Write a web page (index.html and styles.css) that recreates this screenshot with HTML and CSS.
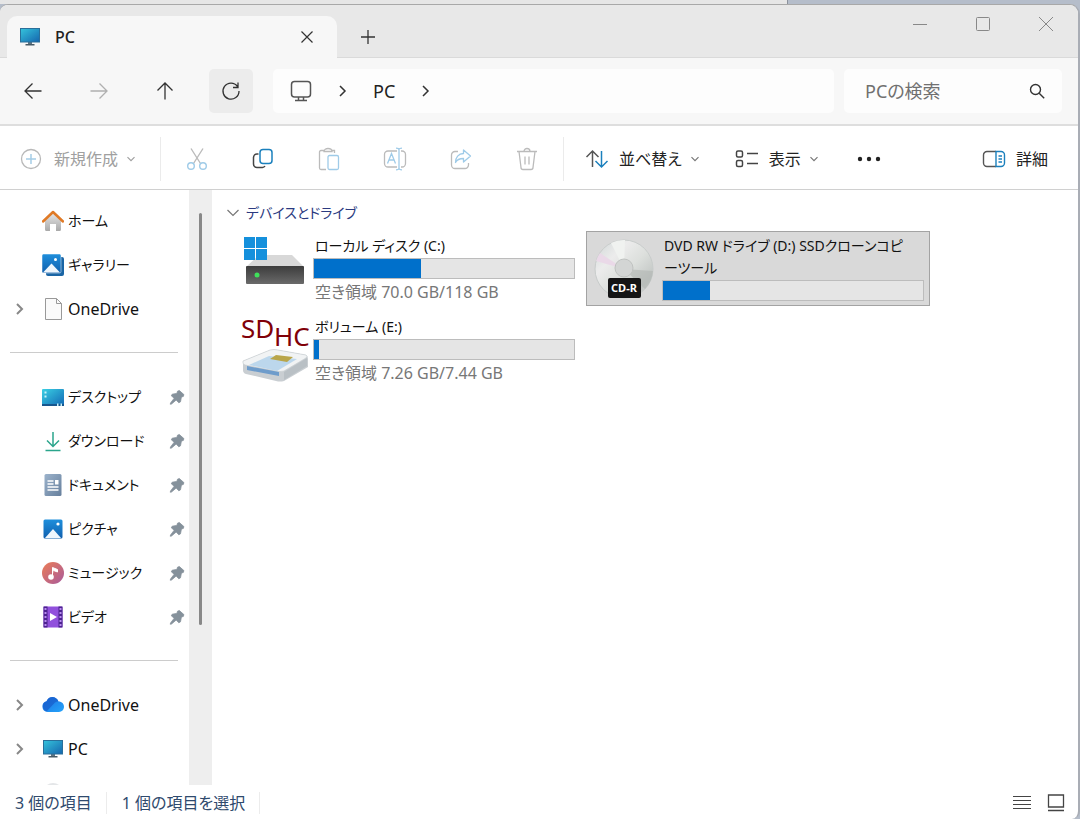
FILE: index.html
```html
<!DOCTYPE html>
<html lang="ja">

<head>
    <meta charset="UTF-8" />
    <meta name="viewport" content="width=device-width, initial-scale=1.0" />
    <title>PC</title>
    <link rel="stylesheet" href="styles.css">
</head>

<body>
    <!-- Shared gradients and icons -->
    <svg class="defs" width="0" height="0" aria-hidden="true">
        <defs>
            <linearGradient id="gScreen" x1="0" y1="0" x2="1" y2="1">
                <stop offset="0" stop-color="#35c4dc" />
                <stop offset="1" stop-color="#1565ae" />
            </linearGradient>
            <linearGradient id="gBlue" x1="0" y1="0" x2="0" y2="1">
                <stop offset="0" stop-color="#1f8fdc" />
                <stop offset="1" stop-color="#0f5fae" />
            </linearGradient>
            <linearGradient id="gDesk" x1="0" y1="0" x2="1" y2="1">
                <stop offset="0" stop-color="#3ad0e4" />
                <stop offset="1" stop-color="#1267b4" />
            </linearGradient>
            <linearGradient id="gWall" x1="0" y1="0" x2="0" y2="1">
                <stop offset="0" stop-color="#e6e6e6" />
                <stop offset="1" stop-color="#a9a9a9" />
            </linearGradient>
            <linearGradient id="gDoc" x1="0" y1="0" x2="1" y2="1">
                <stop offset="0" stop-color="#9cb3cc" />
                <stop offset="1" stop-color="#667f9c" />
            </linearGradient>
            <linearGradient id="gMusic" x1="0" y1="0" x2="1" y2="1">
                <stop offset="0" stop-color="#ec7d55" />
                <stop offset="1" stop-color="#a85a9c" />
            </linearGradient>
            <linearGradient id="gCloud" x1="0" y1="0" x2="1" y2="1">
                <stop offset="0" stop-color="#1c6fe0" />
                <stop offset="1" stop-color="#25a4fa" />
            </linearGradient>
            <linearGradient id="gCase" x1="0" y1="0" x2="0" y2="1">
                <stop offset="0" stop-color="#3c3c3c" />
                <stop offset="1" stop-color="#6a6a6a" />
            </linearGradient>
            <symbol id="monitor" viewBox="0 0 20 18">
                <path d="M8 14h4v3H8z" fill="#5f7380" />
                <rect x="0.5" y="0.5" width="19" height="13.5" fill="url(#gScreen)" stroke="#2a6f9a" />
                <path d="M5.500 16h9v1.500h-9z" fill="#475a66" />
            </symbol>
            <symbol id="pin" viewBox="0 0 16 16">
                <path d="M8.500 2.200l1.800-.7 4.600 4.100-.6 1.900-1.900.5-.9 4.800-1.700 1L7.200 11 2.500 15l-1.300.2.400-1.300L5.200 9.200 2.300 6.800l.9-1.600 4.700-.8z" fill="#85919b" stroke="#85919b" stroke-width=".8" stroke-linejoin="round" />
            </symbol>
            <symbol id="chevron" viewBox="0 0 10 14">
                <path d="M2 2l5 5-5 5" fill="none" stroke="currentColor" stroke-width="2" />
            </symbol>
            <symbol id="down" viewBox="0 0 10 8">
                <path d="M1.500 2.200L5 5.700l3.500-3.500" fill="none" stroke="currentColor" stroke-width="1.200" />
            </symbol>
        </defs>
    </svg>

    <div class="backdrop"></div>

    <div class="window">
        <header class="titlebar">
            <div class="tab">
                <svg class="tab-icon" width="20" height="18"><use href="#monitor" /></svg>
                <span class="tab-title">PC</span>
                <button class="icon-btn tab-close" aria-label="タブを閉じる">
                    <svg width="14" height="14" viewBox="0 0 14 14"><path d="M1.500 1.500l11 11M12.500 1.500l-11 11" fill="none" stroke="#333" stroke-width="1.200" /></svg>
                </button>
            </div>
            <button class="icon-btn new-tab" aria-label="新しいタブ">
                <svg width="16" height="16" viewBox="0 0 16 16"><path d="M8 1v14M1 8h14" fill="none" stroke="#333" stroke-width="1.300" /></svg>
            </button>
            <div class="window-controls">
                <button class="icon-btn" aria-label="最小化">
                    <svg width="16" height="16" viewBox="0 0 16 16"><path d="M1 8.500h14" fill="none" stroke="#888" /></svg>
                </button>
                <button class="icon-btn" aria-label="最大化">
                    <svg width="16" height="16" viewBox="0 0 16 16"><rect x="1.500" y="1.500" width="13" height="13" rx="1" fill="none" stroke="#888" /></svg>
                </button>
                <button class="icon-btn" aria-label="閉じる">
                    <svg width="16" height="16" viewBox="0 0 16 16"><path d="M1 1l14 14M15 1L1 15" fill="none" stroke="#888" /></svg>
                </button>
            </div>
        </header>

        <div class="navbar">
            <div class="nav-buttons">
                <button class="icon-btn nav-btn" aria-label="戻る">
                    <svg width="20" height="20" viewBox="0 0 20 20"><path d="M18.500 10H2M9.500 2.500L2 10l7.500 7.500" fill="none" stroke="#333" stroke-width="1.300" /></svg>
                </button>
                <button class="icon-btn nav-btn" aria-label="進む" disabled>
                    <svg width="20" height="20" viewBox="0 0 20 20"><path d="M1.500 10H18M10.500 2.500L18 10l-7.500 7.500" fill="none" stroke="#b0b0b0" stroke-width="1.300" /></svg>
                </button>
                <button class="icon-btn nav-btn" aria-label="上へ">
                    <svg width="20" height="20" viewBox="0 0 20 20"><path d="M10 18.500V2M2.500 9.500L10 2l7.500 7.500" fill="none" stroke="#333" stroke-width="1.300" /></svg>
                </button>
                <button class="icon-btn nav-btn refresh" aria-label="更新">
                    <svg width="20" height="20" viewBox="0 0 20 20"><path d="M16.500 5.500A8 8 0 1 0 18 10M17 1.500v5h-5" fill="none" stroke="#333" stroke-width="1.300" /></svg>
                </button>
            </div>
            <nav class="address" aria-label="アドレス">
                <svg width="22" height="22" viewBox="0 0 22 22"><g fill="none" stroke="#555" stroke-width="1.500"><rect x="1.500" y="1.500" width="19" height="15.500" rx="3" /><path d="M8.500 17v3M13.500 17v3M5 20.500h12" /></g></svg>
                <svg class="crumb" width="10" height="14" viewBox="0 0 10 14"><path d="M2 2l5 5-5 5" fill="none" stroke="#333" stroke-width="1.500" /></svg>
                <a class="path" href="#">PC</a>
                <svg class="crumb" width="10" height="14" viewBox="0 0 10 14"><path d="M2 2l5 5-5 5" fill="none" stroke="#333" stroke-width="1.500" /></svg>
            </nav>
            <div class="search">
                <input type="text" placeholder="PCの検索" aria-label="PCの検索" />
                <svg width="16" height="16" viewBox="0 0 16 16"><g fill="none" stroke="#333" stroke-width="1.400"><circle cx="6.500" cy="6.500" r="5" /><path d="M10.200 10.200l5 5" /></g></svg>
            </div>
        </div>

        <div class="toolbar">
            <button class="tool new" disabled>
                <svg width="22" height="22" viewBox="0 0 22 22"><circle cx="11" cy="11" r="9.500" fill="none" stroke="#b8b8b8" stroke-width="1.300" /><path d="M11 6v10M6 11h10" stroke="#a5cde6" stroke-width="1.500" /></svg>
                <span>新規作成</span>
                <svg class="caret" width="10" height="8"><use href="#down" /></svg>
            </button>
            <div class="tool-icons">
                <button class="icon-btn" aria-label="切り取り" disabled>
                    <svg width="22" height="24" viewBox="0 0 22 24"><g fill="none" stroke-width="1.400"><path d="M5 1.500l9.500 15M17 1.500l-9.500 15" stroke="#bbb" /><circle cx="5" cy="19" r="3.300" stroke="#9fcbe8" /><circle cx="17" cy="19" r="3.300" stroke="#9fcbe8" /></g></svg>
                </button>
                <button class="icon-btn" aria-label="コピー">
                    <svg width="22" height="22" viewBox="0 0 22 22"><g fill="none" stroke-width="1.500"><path d="M6.500 6H5a3.500 3.500 0 0 0-3.500 3.500V16A3.500 3.500 0 0 0 5 19.500h5.500a3 3 0 0 0 2.500-1.500" stroke="#444" /><rect x="8" y="1.500" width="12" height="14" rx="3" stroke="#1b80bd" /></g></svg>
                </button>
                <button class="icon-btn" aria-label="貼り付け" disabled>
                    <svg width="22" height="24" viewBox="0 0 22 24"><g fill="none" stroke-width="1.300"><path d="M6 3.500H3A1.500 1.500 0 0 0 1.500 5v16A1.500 1.500 0 0 0 3 22.500h5M14 3.500h2.500V6M6 4.500c0-4 8-4 8 0z" stroke="#bbb" /><rect x="10" y="8.500" width="10.500" height="14" rx="1.500" stroke="#9fcbe8" /></g></svg>
                </button>
                <button class="icon-btn" aria-label="名前の変更" disabled>
                    <svg width="24" height="24" viewBox="0 0 24 24"><g fill="none" stroke-width="1.300"><path d="M14 4H5a3.500 3.500 0 0 0-3.500 3.500v9A3.500 3.500 0 0 0 5 20h9M18 4h1a3.500 3.500 0 0 1 3.500 3.500v9A3.500 3.500 0 0 1 19 20h-1" stroke="#bbb" /><path d="M16 1.500v21M13 1.200c2 0 3 .3 3 1.500 0-1.200 1-1.500 3-1.500M13 22.800c2 0 3-.3 3-1.500 0 1.200 1 1.500 3 1.500M4.500 16.500l4-10 4 10M6 13h5" stroke="#9fcbe8" /></g></svg>
                </button>
                <button class="icon-btn" aria-label="共有" disabled>
                    <svg width="22" height="22" viewBox="0 0 22 22"><g fill="none" stroke-width="1.300"><path d="M8 3.500H5A3.500 3.500 0 0 0 1.500 7v10A3.500 3.500 0 0 0 5 20.500h10a3.500 3.500 0 0 0 3.500-3.500v-2" stroke="#bbb" /><path d="M13.500 2l7 6-7 6v-3.500c-4 0-6.500 1-8 4 0-5 3-9 8-9z" stroke="#9fcbe8" stroke-linejoin="round" /></g></svg>
                </button>
                <button class="icon-btn" aria-label="削除" disabled>
                    <svg width="22" height="24" viewBox="0 0 22 24"><path d="M1 4.500h20M8 4.500c0-4 6-4 6 0M3 4.500l2 16a2 2 0 0 0 2 2h8a2 2 0 0 0 2-2l2-16M9 9.500v8M13 9.500v8" fill="none" stroke="#bbb" stroke-width="1.300" /></svg>
                </button>
            </div>
            <button class="tool sort">
                <svg width="24" height="20" viewBox="0 0 24 20"><g fill="none" stroke-width="1.500"><path d="M7.500 18V2M1.500 8l6-6 6 6" stroke="#555" /><path d="M16.500 2v16M10.500 12l6 6 6-6" stroke="#1b80bd" /></g></svg>
                <span>並べ替え</span>
                <svg class="caret" width="10" height="8"><use href="#down" /></svg>
            </button>
            <button class="tool view">
                <svg width="24" height="20" viewBox="0 0 24 20"><g fill="none" stroke="#444" stroke-width="1.500"><rect x="1.500" y="2" width="6" height="6" rx="1.500" /><rect x="1.500" y="11.500" width="6" height="6" rx="1.500" /><path d="M12 4.500h11M12 14.500h11" /></g></svg>
                <span>表示</span>
                <svg class="caret" width="10" height="8"><use href="#down" /></svg>
            </button>
            <button class="icon-btn more" aria-label="もっと見る">
                <svg width="24" height="6" viewBox="0 0 24 6"><g fill="#222"><circle cx="3" cy="3" r="2.200" /><circle cx="12" cy="3" r="2.200" /><circle cx="21" cy="3" r="2.200" /></g></svg>
            </button>
            <button class="tool details">
                <svg width="24" height="18" viewBox="0 0 24 18"><g fill="none" stroke-width="1.400"><path d="M14 1.500H5A3.500 3.500 0 0 0 1.500 5v8A3.500 3.500 0 0 0 5 16.500h9" stroke="#555" /><path d="M14 1.500h5A3.500 3.500 0 0 1 22.500 5v8a3.500 3.500 0 0 1-3.500 3.500h-5zM16.500 6H20M16.500 9H20M16.500 12H20" stroke="#1b80bd" /></g></svg>
                <span>詳細</span>
            </button>
        </div>

        <div class="content">
            <aside class="sidebar">
                <ul class="side-list">
                    <li class="side-item">
                        <span class="side-arrow"></span>
                        <svg class="side-icon" viewBox="0 0 22 22"><path d="M3 10l8-7 8 7v9.500a1.500 1.500 0 0 1-1.500 1.500H14v-7H8v7H4.500A1.500 1.500 0 0 1 3 19.500z" fill="url(#gWall)" /><path d="M1 11.500l10-9.500 10 9.500" fill="none" stroke="#e07a26" stroke-width="2.500" stroke-linecap="round" stroke-linejoin="round" /></svg>
                        <a href="#">ホーム</a>
                    </li>
                    <li class="side-item">
                        <span class="side-arrow"></span>
                        <svg class="side-icon" viewBox="0 0 22 22"><rect x="4" y="3" width="18" height="19" rx="2" fill="#1a65a5" /><rect x="0" y="0" width="19" height="19" rx="1.500" fill="url(#gBlue)" stroke="#fff" stroke-width=".5" /><path d="M1 18.500l8.500-9 8.500 9z" fill="#eef6fd" /><circle cx="13.500" cy="5.500" r="1.500" fill="#fff" /></svg>
                        <a href="#">ギャラリー</a>
                    </li>
                    <li class="side-item">
                        <svg class="side-arrow" width="10" height="14"><use href="#chevron" /></svg>
                        <svg class="side-icon" viewBox="0 0 22 22"><path d="M3.500.5h11l5 5v16h-16z" fill="#fafafa" stroke="#999" /><path d="M14.500.5v5h5" fill="none" stroke="#999" /></svg>
                        <a class="latin" href="#">OneDrive</a>
                    </li>
                </ul>
                <hr class="side-line" />
                <ul class="side-list">
                    <li class="side-item">
                        <span class="side-arrow"></span>
                        <svg class="side-icon" viewBox="0 0 22 22"><rect y="3" width="22" height="17" rx="1" fill="url(#gDesk)" /><path d="M0 18h22v2H0z" fill="#17568e" /><path d="M2.500 5.500h2v2h-2zM2.500 9.500h2v2h-2zM15 17.500h1.500V20H15zM18.500 17.500H20V20h-1.500z" fill="#c8f3fa" /></svg>
                        <a href="#">デスクトップ</a>
                        <svg class="pin" width="16" height="16"><use href="#pin" /></svg>
                    </li>
                    <li class="side-item">
                        <span class="side-arrow"></span>
                        <svg class="side-icon" viewBox="0 0 22 22"><path d="M11 2v14M5 10.500l6 6 6-6M3.500 20.500h15" fill="none" stroke="#2ba58c" stroke-width="1.500" /></svg>
                        <a href="#">ダウンロード</a>
                        <svg class="pin" width="16" height="16"><use href="#pin" /></svg>
                    </li>
                    <li class="side-item">
                        <span class="side-arrow"></span>
                        <svg class="side-icon" viewBox="0 0 22 22"><rect x="2.500" y="0" width="17" height="22" rx="1.500" fill="url(#gDoc)" /><path d="M5.500 7h6M5.500 10h6M5.500 13h11M5.500 16h11" stroke="#fff" stroke-width="1.500" /><path d="M13 6h3.500v4.500H13z" fill="#fff" /></svg>
                        <a href="#">ドキュメント</a>
                        <svg class="pin" width="16" height="16"><use href="#pin" /></svg>
                    </li>
                    <li class="side-item">
                        <span class="side-arrow"></span>
                        <svg class="side-icon" viewBox="0 0 22 22"><rect x="1.500" y="1.500" width="19" height="19" rx="1.500" fill="url(#gBlue)" /><path d="M3 20l8-9 8 9z" fill="#eef6fd" /><circle cx="16" cy="6" r="1.600" fill="#fff" /></svg>
                        <a href="#">ピクチャ</a>
                        <svg class="pin" width="16" height="16"><use href="#pin" /></svg>
                    </li>
                    <li class="side-item">
                        <span class="side-arrow"></span>
                        <svg class="side-icon" viewBox="0 0 22 22"><circle cx="11" cy="11" r="11" fill="url(#gMusic)" /><circle cx="9" cy="15" r="2.800" fill="#fff" /><path d="M10.500 15V5.500l5 2v2.500l-4-1.500" fill="#fff" stroke="#fff" /></svg>
                        <a href="#">ミュージック</a>
                        <svg class="pin" width="16" height="16"><use href="#pin" /></svg>
                    </li>
                    <li class="side-item">
                        <span class="side-arrow"></span>
                        <svg class="side-icon" viewBox="0 0 22 22"><rect x="1.500" y=".5" width="19" height="21" rx="1" fill="#9150dc" /><path d="M1.500.5h4v21h-4zM16.500.5h4v21h-4z" fill="#4d2390" /><path d="M3.500 2v19M18.500 2v19" stroke="#b98cf0" stroke-width="2" stroke-dasharray="2 2" /><path d="M8 7l7 4-7 4z" fill="#fff" /></svg>
                        <a href="#">ビデオ</a>
                        <svg class="pin" width="16" height="16"><use href="#pin" /></svg>
                    </li>
                </ul>
                <hr class="side-line" />
                <ul class="side-list">
                    <li class="side-item">
                        <svg class="side-arrow" width="10" height="14"><use href="#chevron" /></svg>
                        <svg class="side-icon" viewBox="0 0 22 22"><path d="M5.500 18A5.500 5.500 0 0 1 4.500 7.200C6.500 1.500 14.500 1.500 16.500 7.500c3.500 0 5.500 2.500 5.500 5.300 0 3-2.200 5.200-5 5.200z" fill="url(#gCloud)" /><path d="M4.500 17.500L13 8.500c1.200-1 2.300-1.200 3.500-1C14.500 1.500 6.500 1.500 4.500 7.200A5.500 5.500 0 0 0 4.500 17.500z" fill="#1759c8" opacity=".65" /></svg>
                        <a class="latin" href="#">OneDrive</a>
                    </li>
                    <li class="side-item">
                        <svg class="side-arrow" width="10" height="14"><use href="#chevron" /></svg>
                        <svg class="side-icon" viewBox="-1 -2 22 22"><use href="#monitor" width="20" height="18" /></svg>
                        <a class="latin" href="#">PC</a>
                    </li>
                    <li class="side-item">
                        <span class="side-arrow"></span>
                        <svg class="side-icon" viewBox="0 0 22 22"><circle cx="11" cy="11" r="10" fill="#e4e6e8" /></svg>
                    </li>
                </ul>
            </aside>
            <div class="scrollbar"><div class="thumb"></div></div>

            <main class="files">
                <h2 class="group-title">
                    <svg width="14" height="10" viewBox="0 0 14 10"><path d="M1.500 2L7 7.500 12.500 2" fill="none" stroke="#777" stroke-width="1.200" /></svg>
                    デバイスとドライブ
                </h2>
                <div class="drives">
                    <div class="drive">
                        <svg class="drive-icon" viewBox="0 0 66 70">
                            <path d="M17 20h33l12 12H4z" fill="#d8d8d8" />
                            <rect x="4" y="31" width="58" height="18" rx="1" fill="url(#gCase)" />
                            <circle cx="15" cy="40" r="2.500" fill="#3fe05a" />
                            <path d="M2 2h11v11H2zM14 2h11v11H14zM2 14h11v11H2zM14 14h11v11H14z" fill="#1590dc" />
                        </svg>
                        <div class="drive-info">
                            <p class="drive-name">ローカル ディスク (C:)</p>
                            <div class="bar"><div class="fill" style="width: 41%"></div></div>
                            <p class="drive-free">空き領域 70.0 GB/118 GB</p>
                        </div>
                    </div>
                    <div class="drive selected">
                        <svg class="drive-icon" viewBox="0 0 66 70">
                            <defs>
                                <linearGradient id="gDisc" x1="0" y1="0" x2="1" y2="1">
                                    <stop offset="0" stop-color="#cfd6d6" />
                                    <stop offset=".3" stop-color="#ececec" />
                                    <stop offset=".55" stop-color="#dcdfdc" />
                                    <stop offset=".8" stop-color="#c3c7c5" />
                                    <stop offset="1" stop-color="#dedede" />
                                </linearGradient>
                            </defs>
                            <circle cx="33" cy="34" r="29" fill="url(#gDisc)" stroke="#c8cccb" />
                            <path d="M33 34L5 26a29 29 0 0 1 4-8z" fill="#ead9e8" />
                            <path d="M33 34L20 8a29 29 0 0 1 14-3z" fill="#f0f2f0" />
                            <path d="M33 34l29 2a29 29 0 0 1-8 18z" fill="#b0b5b3" opacity=".6" />
                            <circle cx="33" cy="33" r="9" fill="#d3d5d4" stroke="#bfc2c0" />
                            <rect x="17" y="43" width="33" height="20" rx="2" fill="#151515" />
                            <text class="disc-label" x="33" y="57" text-anchor="middle">CD-R</text>
                        </svg>
                        <div class="drive-info">
                            <p class="drive-name">DVD RW ドライブ (D:) SSDクローンコピ<br />ーツール</p>
                            <div class="bar"><div class="fill" style="width: 18%"></div></div>
                        </div>
                    </div>
                    <div class="drive">
                        <svg class="drive-icon" viewBox="0 0 66 70">
                            <text class="sd-label" x="-1" y="22">SD</text>
                            <text class="sd-label" x="32" y="30">HC</text>
                            <path d="M1 45L28 34q4-1 8 0l28 5q2 1 2 4v8L42 65q-4 1-8 0L4 58q-3-1-3-4z" fill="#c9ced2" />
                            <path d="M1 45L28 34q4-1 8 0l28 5q2 1 0 3L42 55q-4 1-8 0L3 49q-3-1-2-4z" fill="#f1f3f4" stroke="#c3c9cd" stroke-width=".6" />
                            <path d="M5 50l32 6v4L5 54z" fill="#6e9ccb" />
                            <path d="M7 49l20-9 28 3-20 12z" fill="#bcd7ec" />
                            <path d="M28 43l6-4 17 2-6 5z" fill="#b9a64a" />
                            <path d="M42 56l23-14v8L42 64z" fill="#b9c0c5" />
                        </svg>
                        <div class="drive-info">
                            <p class="drive-name">ボリューム (E:)</p>
                            <div class="bar"><div class="fill" style="width: 2%"></div></div>
                            <p class="drive-free">空き領域 7.26 GB/7.44 GB</p>
                        </div>
                    </div>
                </div>
            </main>
        </div>

        <footer class="statusbar">
            <span class="status">3 個の項目</span>
            <span class="status">1 個の項目を選択</span>
            <div class="view-switch">
                <button class="icon-btn" aria-label="詳細表示">
                    <svg width="18" height="18" viewBox="0 0 18 18"><path d="M0 2.500h18M0 6.500h18M0 10.500h18M0 14.500h18" stroke="#444" /></svg>
                </button>
                <button class="icon-btn" aria-label="大きいアイコン">
                    <svg width="18" height="18" viewBox="0 0 18 18"><path d="M1.500 1h15v12h-15zM1 16.500h16" fill="none" stroke="#444" stroke-width="1.300" /></svg>
                </button>
            </div>
        </footer>
    </div>
</body>

</html>
```

FILE: styles.css
```css
* {
    box-sizing: border-box;
    margin: 0;
    padding: 0;
}

body {
    font-family: "Noto Sans", "Noto Sans CJK JP", sans-serif;
    font-size: 16px;
    line-height: 22px;
    color: #222;
    background: #b5bdca;
    height: 100vh;
    display: flex;
    flex-direction: column;
    overflow: hidden;
}

button,
input {
    font: inherit;
    color: inherit;
    background: none;
    border: none;
}

a {
    color: inherit;
    text-decoration: none;
}

ul {
    list-style: none;
}

svg {
    display: block;
    flex-shrink: 0;
}

.defs {
    position: absolute;
}

/* Window behind this one */
.backdrop {
    width: 73%;
    height: 4px;
    flex-shrink: 0;
    background: #e6e6e6;
    border-right: 1px solid #8c929c;
}

.window {
    flex: 1;
    min-height: 0;
    display: flex;
    flex-direction: column;
    background: #fff;
    border-top: 1px solid #a8a8a8;
    border-right: 2px solid #a9adb5;
    border-radius: 8px 10px 8px 0;
    overflow: hidden;
}

.icon-btn {
    display: flex;
    align-items: center;
    justify-content: center;
}

/* Title bar */
.titlebar {
    height: 53px;
    display: flex;
    align-items: flex-end;
    flex-shrink: 0;
    background: #e8e8e8;
    border-bottom: 1px solid #dadada;
    padding-left: 7px;
}

.tab {
    width: 330px;
    height: 42px;
    display: flex;
    align-items: center;
    background: #f7f7f7;
    border-radius: 10px 10px 0 0;
    padding: 0 20px 0 13px;
    margin-bottom: -1px;
}

.tab-title {
    flex: 1;
    margin-left: 15px;
    font-weight: 500;
}

.tab-close,
.new-tab {
    width: 20px;
    height: 42px;
}

.new-tab {
    margin: 0 0 -1px 21px;
}

.window-controls {
    display: flex;
    align-self: flex-start;
    margin-left: auto;
    padding-right: 1px;
}

.window-controls .icon-btn {
    width: 63px;
    height: 37px;
}

/* Navigation */
.navbar {
    height: 68px;
    display: flex;
    align-items: center;
    flex-shrink: 0;
    gap: 10px;
    background: #f7f7f7;
    border-bottom: 2px solid #dedede;
    padding: 0 16px 0 11px;
}

.nav-buttons {
    display: flex;
    gap: 22px;
    margin-right: 10px;
}

.nav-btn {
    width: 44px;
    height: 44px;
    border-radius: 5px;
}

.refresh {
    background: #ececec;
}

.address,
.search {
    height: 44px;
    display: flex;
    align-items: center;
    background: #fdfdfd;
    border-radius: 5px;
}

.address {
    flex: 1;
    padding-left: 17px;
}

.crumb {
    margin-left: 26px;
}

.path {
    margin-left: 25px;
    font-size: 18px;
}

.search {
    width: 218px;
    padding: 0 17px 0 21px;
}

.search input {
    flex: 1;
    min-width: 0;
    outline: none;
    font-size: 18px;
    font-feature-settings: "palt";
}

.search input::placeholder {
    color: #707070;
    opacity: 1;
}

/* Command bar */
.toolbar {
    height: 64px;
    display: flex;
    align-items: center;
    flex-shrink: 0;
    border-bottom: 1px solid #d0d0d0;
    padding: 2px 30px 0 20px;
}

.tool {
    display: flex;
    align-items: center;
    font-feature-settings: "palt";
}

.tool span {
    margin-left: 10px;
}

.caret {
    margin-left: 8px;
    color: #777;
}

.new {
    color: #a0a0a0;
    margin-right: 24px;
}

.new span {
    margin-left: 12px;
}

.new .caret {
    color: #a0a0a0;
}

.tool-icons {
    display: flex;
    border-left: 1px solid #ebebeb;
    border-right: 1px solid #ebebeb;
    padding: 0 3px;
    margin-right: 21px;
}

.tool-icons .icon-btn {
    width: 66px;
    height: 44px;
}

.view {
    margin-left: 35px;
}

.more {
    margin-left: 38px;
}

.details {
    margin-left: auto;
}

/* Content */
.content {
    flex: 1;
    min-height: 0;
    display: flex;
}

.sidebar {
    width: 189px;
    flex-shrink: 0;
    overflow: hidden;
    padding: 9px 4px 0 10px;
}

.side-item {
    height: 44px;
    display: flex;
    align-items: center;
    color: #111;
}

.side-item a {
    flex: 1;
    margin-left: 4px;
    font-size: 14px;
    font-feature-settings: "palt";
    white-space: nowrap;
}

.side-item .latin {
    font-size: 16px;
}

.side-arrow {
    width: 10px;
    margin: 0 17px 0 5px;
    color: #888;
}

.side-icon {
    width: 22px;
    height: 22px;
}

.side-line {
    border: none;
    border-top: 1px solid #ccc;
    margin: 21px 7px 22px 0;
}

.scrollbar {
    width: 23px;
    flex-shrink: 0;
    background: #eee;
    padding: 23px 10px 0;
}

.thumb {
    height: 72%;
    border-radius: 2px;
    background: #888;
}

.files {
    flex: 1;
    padding: 12px 14px;
}

.group-title {
    display: flex;
    align-items: center;
    gap: 6px;
    font-size: 14px;
    font-weight: 400;
    color: #2b3a80;
    font-feature-settings: "palt";
}

.drives {
    display: grid;
    grid-template-columns: repeat(auto-fill, 344px);
    gap: 6px 5px;
    padding: 7px 0 0 11px;
}

.drive {
    min-height: 74px;
    display: flex;
    border: 1px solid transparent;
    padding: 3px 5px 0 4px;
}

.drive.selected {
    background: #d9d9d9;
    border-color: #a3a3a3;
}

.drive-icon {
    width: 66px;
    height: 70px;
    overflow: visible;
}

.drive-info {
    flex: 1;
    margin-left: 5px;
}

.drive-name,
.drive-free {
    padding-left: 2px;
    font-feature-settings: "palt";
    white-space: nowrap;
}

.drive-name {
    font-size: 14px;
    color: #111;
}

.drive-free {
    font-size: 16px;
    margin-top: 2px;
    color: #777;
}

.bar {
    height: 21px;
    margin-top: 1px;
    background: #e5e5e5;
    border: 1px solid #bcbcbc;
}

.fill {
    height: 100%;
    background: #0070cb;
}

.sd-label {
    font: 26px "Noto Sans", sans-serif;
    fill: #800008;
}

.disc-label {
    font: bold 11px "Noto Sans", sans-serif;
    fill: #fff;
}

/* Status bar */
.statusbar {
    height: 34px;
    display: flex;
    align-items: center;
    flex-shrink: 0;
    color: #2f4a6d;
    font-feature-settings: "palt";
    padding: 2px 13px 0 0;
}

.status {
    padding: 0 14px 0 15px;
    border-right: 1px solid #ececec;
}

.view-switch {
    display: flex;
    gap: 16px;
    margin-left: auto;
}
```
